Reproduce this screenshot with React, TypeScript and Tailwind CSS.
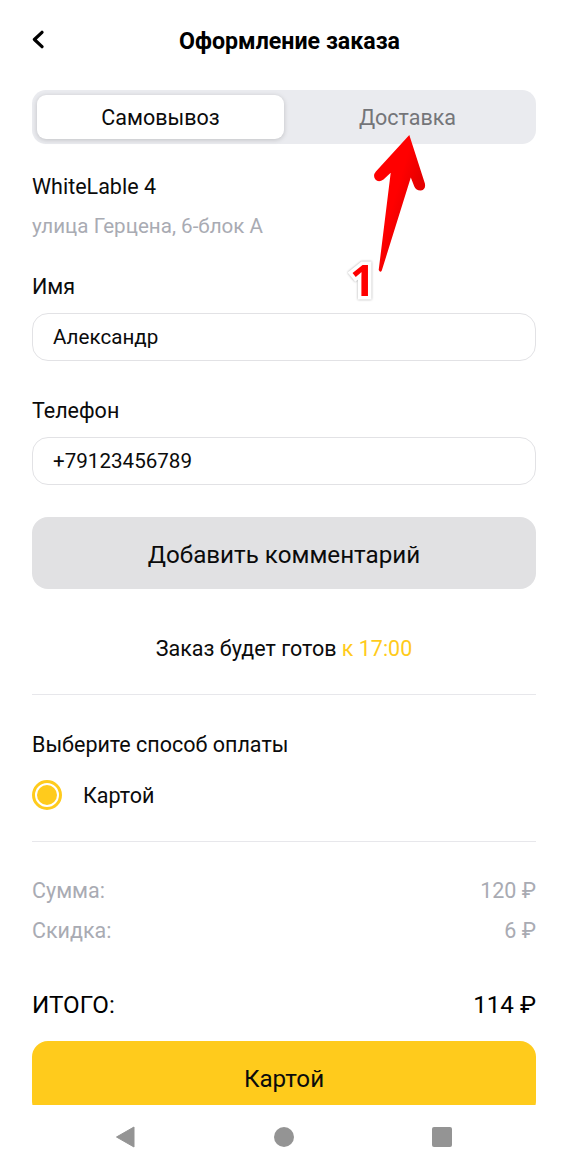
import React, { useState } from 'react';

const totals = [
  { label: 'Сумма:', value: '120 ₽' },
  { label: 'Скидка:', value: '6 ₽' },
];

const Field: React.FC<{ label: string; value: string; onChange: (value: string) => void }> = ({ label, value, onChange }) => (
  <label className="block">
    <span className="block h-10 pt-px leading-10">{label}</span>
    <input
      className="mt-[7px] block h-12 w-full rounded-[16px] border-[1.5px] border-[#e2e2e5] bg-white px-5 text-[20.6px] outline-none"
      value={value}
      onChange={e => onChange(e.target.value)}
    />
  </label>
);

// Red pointer with the step number, drawn over the form
const StepPointer: React.FC = () => (
  <div className="pointer-events-none absolute left-[340px] top-[130px] h-[180px] w-[100px]">
    <svg className="h-[180px] w-[100px]" viewBox="0 0 100 180">
      <defs>
        <linearGradient id="pointer" x1="45" y1="70" x2="72" y2="78" gradientUnits="userSpaceOnUse">
          <stop offset="0.3" stopColor="#ff0000" />
          <stop offset="1" stopColor="#e60000" />
        </linearGradient>
      </defs>
      <path
        d="M69.3 5 L84.9 53.5 Q86 59.500 81 60.5 Q76.200 60.800 74.300 56.500 L70.800 47.500 L41.800 140.500 Q40.300 143.300 38.700 140 L50.700 42.800 L43.500 49.500 Q38.500 53.200 35.200 49.300 Q32.600 45.300 35.900 41.500 Z"
        fill="url(#pointer)"
      />
    </svg>
    <span className="absolute left-[10px] top-[120px] font-['Open_Sans',sans-serif] text-[43.5px] leading-[60px] font-bold text-[#ff0000] [paint-order:stroke_fill] [stroke-linejoin:round] [-webkit-text-stroke:7px_white] [filter:drop-shadow(0_0.5px_1px_rgba(0,0,0,0.35))]">
      1
    </span>
  </div>
);

const App: React.FC = () => {
  const [tab, setTab] = useState('pickup');
  const [name, setName] = useState('Александр');
  const [phone, setPhone] = useState('+79123456789');

  return (
    <div className="relative flex h-[1169px] w-[568px] flex-col overflow-hidden bg-white font-[Roboto,sans-serif] text-[21.5px] text-[#0b0b0b]">
      <header className="flex h-[90px] items-start px-8 pt-5">
        <button className="flex h-10 w-10 items-center">
          <svg className="h-5 w-3" viewBox="0 0 12 20" fill="none" stroke="black" strokeWidth="3.2" strokeLinecap="round" strokeLinejoin="round">
            <path d="M10 2.300 L2.400 9.500 L10 16.700" />
          </svg>
        </button>
        <h1 className="h-10 flex-1 pt-px pr-[29px] text-center text-[23.2px] leading-10 font-bold text-black">Оформление заказа</h1>
      </header>

      <main className="h-[1015px] overflow-hidden px-8">
        <div className="flex h-[54px] rounded-[14px] bg-[#eaebef] p-[5px]">
          <button
            className="h-11 w-[247px] rounded-[9px] bg-white pt-[3px] shadow-[0_1px_5px_rgba(0,0,0,0.18)]"
            onClick={() => setTab('pickup')}
            aria-pressed={tab === 'pickup'}
          >
            Самовывоз
          </button>
          <button className="h-11 flex-1 pt-[3px] text-[#747579]" onClick={() => setTab('delivery')} aria-pressed={tab === 'delivery'}>
            Доставка
          </button>
        </div>

        <p className="mt-[22px] h-10 pt-px leading-10">WhiteLable 4</p>
        <p className="h-10 text-[20.6px] leading-10 text-[#a9abb3]">улица Герцена, 6-блок А</p>

        <div className="mt-5 flex flex-col gap-[29px]">
          <Field label="Имя" value={name} onChange={setName} />
          <Field label="Телефон" value={phone} onChange={setPhone} />
        </div>

        <button className="mt-8 h-[72px] w-full rounded-[16px] bg-[#e1e1e3] pt-[5px] text-[24.2px]">Добавить комментарий</button>

        <p className="mt-10 h-10 text-center leading-10">
          Заказ будет готов <span className="text-[#ffcb1c]">к 17:00</span>
        </p>
        <hr className="mt-[25px] border-t-[1.5px] border-[#e7e7eb]" />

        <h2 className="mt-[30px] h-10 leading-10">Выберите способ оплаты</h2>
        <div className="mt-[10px] flex h-10 items-center gap-[21px]">
          <span className="flex h-[30px] w-[30px] items-center justify-center rounded-full border-[3px] border-[#ffcb1c]">
            <span className="h-5 w-5 rounded-full bg-[#ffcb1c]" />
          </span>
          <span className="pt-0.5">Картой</span>
        </div>
        <hr className="mt-[26px] border-t-[1.5px] border-[#e7e7eb]" />

        <div className="mt-[29px] text-[#a9abb3]">
          {totals.map(row => (
            <div key={row.label} className="flex h-10 justify-between leading-10">
              <span>{row.label}</span>
              <span>{row.value}</span>
            </div>
          ))}
        </div>
        <div className="mt-[34px] flex h-10 justify-between text-[24.2px] leading-10 text-black">
          <span>ИТОГО:</span>
          <span>114 ₽</span>
        </div>

        <button className="mt-4 h-[76px] w-full rounded-[16px] bg-[#ffcb1c] text-[24.2px]">Картой</button>
      </main>

      <nav className="flex h-16 items-center justify-between pr-[116px] pl-[115px]">
        <svg className="h-[22px] w-5" viewBox="0 0 20 22" fill="#949494" stroke="#949494" strokeLinejoin="round">
          <path d="M1.500 11 L19 1 V21 Z" />
        </svg>
        <span className="h-5 w-5 rounded-full bg-[#949494]" />
        <span className="h-5 w-5 rounded-[2px] bg-[#949494]" />
      </nav>

      <StepPointer />
    </div>
  );
};

export default App;
